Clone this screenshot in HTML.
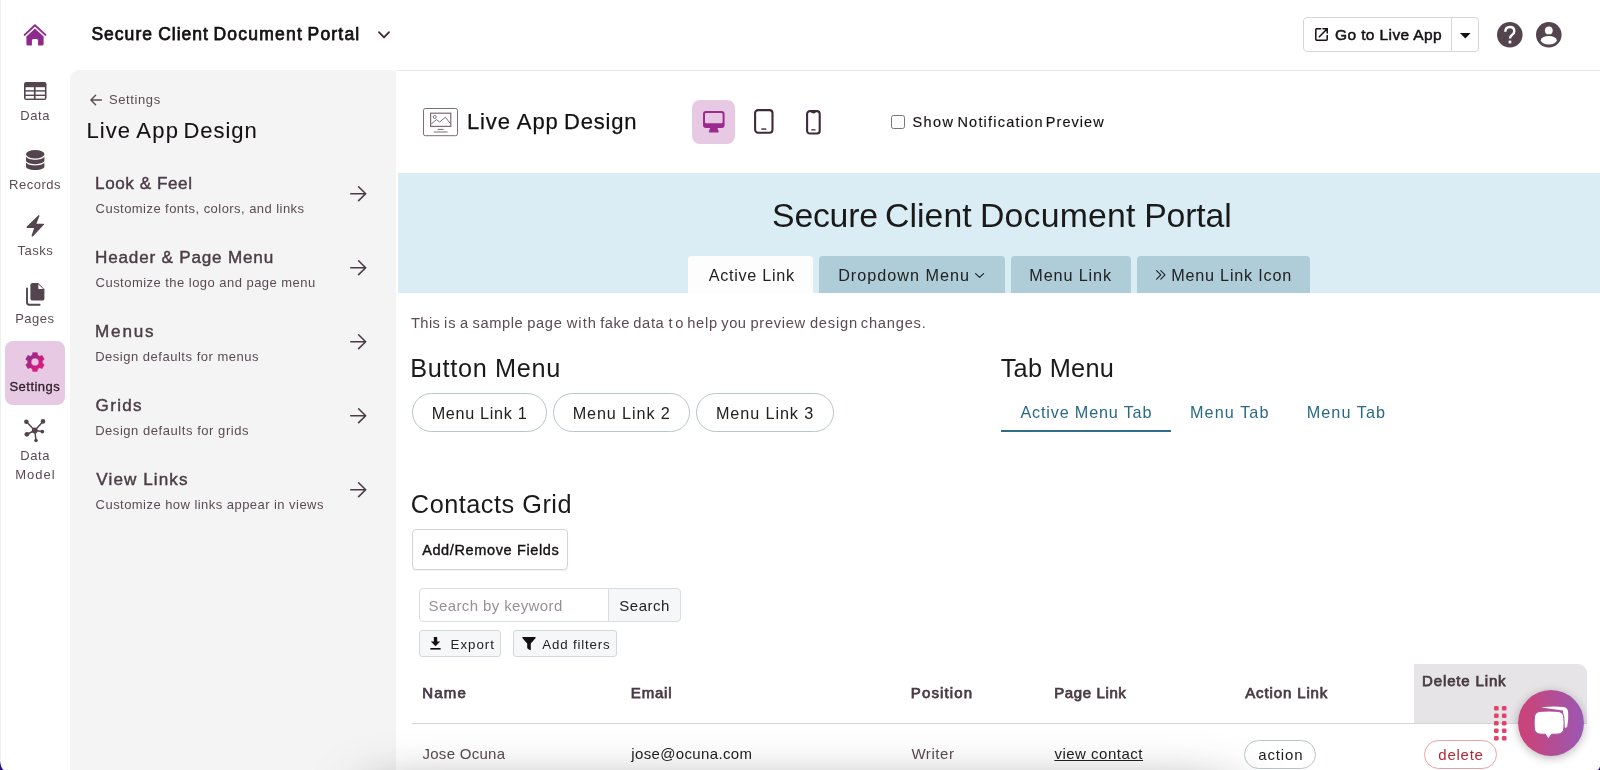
<!DOCTYPE html>
<html lang="en"><head><meta charset="utf-8"><title>Live App Design</title>
<style>
html,body{margin:0;padding:0}
body{width:1600px;height:770px;overflow:hidden;position:relative;background:#fff;font-family:"Liberation Sans",sans-serif;}
.t{position:absolute;white-space:nowrap;display:block}
.a{position:absolute;box-sizing:border-box}
svg{position:absolute;overflow:visible}
</style></head><body>
<!-- bottom shadow -->
<!-- left edge -->
<div class="a" style="left:0;top:0;width:1px;height:760px;background:#efefef"></div>
<!-- top bar border -->
<div class="a" style="left:397px;top:70px;width:1203px;height:1px;background:#e7e5e6"></div>
<!-- settings panel -->
<div class="a" style="left:70px;top:70px;width:326px;height:700px;background:#f4f4f4;border-top-left-radius:9px"></div>
<!-- sidebar selected -->
<div class="a" style="left:5px;top:341px;width:60px;height:64px;background:#e8c9e4;border-radius:8px"></div>
<!-- go to live app button -->
<div class="a" style="left:1303px;top:17px;width:176px;height:35px;border:1px solid #d9d5d7;border-radius:4px"></div>
<div class="a" style="left:1451px;top:18px;width:1px;height:33px;background:#d9d5d7"></div>
<!-- device selected -->
<div class="a" style="left:691.7px;top:100px;width:43.6px;height:44px;background:#e8c9e4;border-radius:8px"></div>
<!-- checkbox -->
<div class="a" style="left:891px;top:115px;width:14px;height:14px;border:1px solid #767676;border-radius:2.5px;background:#fff"></div>
<!-- banner -->
<div class="a" style="left:398px;top:173px;width:1202px;height:120px;background:#daedf4"></div>
<div class="a" style="left:688px;top:256px;width:125px;height:37px;background:#fdfdfe;border-radius:4px 4px 0 0"></div>
<div class="a" style="left:819px;top:256px;width:186px;height:37px;background:#aecdd9;border-radius:4px 4px 0 0"></div>
<div class="a" style="left:1011px;top:256px;width:120px;height:37px;background:#aecdd9;border-radius:4px 4px 0 0"></div>
<div class="a" style="left:1137px;top:256px;width:173px;height:37px;background:#aecdd9;border-radius:4px 4px 0 0"></div>
<!-- button menu -->
<div class="a" style="left:412px;top:393px;width:135px;height:39px;border:1px solid #b9c5c9;border-radius:20px"></div>
<div class="a" style="left:553px;top:393px;width:137px;height:39px;border:1px solid #b9c5c9;border-radius:20px"></div>
<div class="a" style="left:696px;top:393px;width:138px;height:39px;border:1px solid #b9c5c9;border-radius:20px"></div>
<!-- tab underline -->
<div class="a" style="left:1000.5px;top:430px;width:170px;height:2px;background:#2f6e8a"></div>
<!-- add/remove -->
<div class="a" style="left:412px;top:529px;width:156px;height:41px;border:1px solid #d6d3d5;border-radius:4px;box-shadow:0 1px 1px rgba(0,0,0,.06)"></div>
<!-- search -->
<div class="a" style="left:419px;top:588px;width:190px;height:34px;border:1px solid #d8dde3;border-radius:4px 0 0 4px;background:#fff"></div>
<div class="a" style="left:608px;top:588px;width:73px;height:34px;border:1px solid #d8dde3;border-radius:0 4px 4px 0;background:#f6f7f9"></div>
<div class="a" style="left:419px;top:630px;width:82px;height:26.5px;border:1px solid #d3d8de;border-radius:3px;background:#f6f7f9"></div>
<div class="a" style="left:513px;top:630px;width:104px;height:26.5px;border:1px solid #d3d8de;border-radius:3px;background:#f6f7f9"></div>
<!-- table -->
<div class="a" style="left:1414px;top:664px;width:173px;height:59px;background:#e6e4e6;border-top-right-radius:9px"></div>
<div class="a" style="left:412px;top:723px;width:1175px;height:1px;background:#d6d6d6"></div>
<div class="a" style="left:1244px;top:740px;width:72px;height:29px;border:1px solid #b9c5c9;border-radius:15px;background:#fff"></div>
<div class="a" style="left:1424px;top:740px;width:73px;height:29px;border:1px solid #e8a5a8;border-radius:15px;background:#fff"></div>
<!-- home -->
<svg style="left:23px;top:23px" width="24" height="24" viewBox="0 0 24 24"><path d="M1.6 11.9 L12 2.3 L22.4 11.9" fill="none" stroke="#8e2a8b" stroke-width="1.9" stroke-linecap="round" stroke-linejoin="round"/><path d="M12 5.6 L20.6 13.4 V21 Q20.6 22.5 19.1 22.5 H15.1 V17.6 Q15.1 16 13.6 16 H10.4 Q8.9 16 8.9 17.6 V22.5 H4.9 Q3.4 22.5 3.4 21 V13.4 Z" fill="#8e2a8b"/></svg>
<!-- table -->
<svg style="left:23.5px;top:82.2px" width="22.5" height="18" viewBox="0 0 22.5 18"><rect x="0" y="0" width="22.5" height="18" rx="2.2" fill="#54444e"/><g fill="#fff"><rect x="1.6" y="5.2" width="8.3" height="3"/><rect x="11.6" y="5.2" width="9.3" height="3"/><rect x="1.6" y="9.6" width="8.3" height="3"/><rect x="11.6" y="9.6" width="9.3" height="3"/><rect x="1.6" y="14" width="8.3" height="2.6"/><rect x="11.6" y="14" width="9.3" height="2.6"/></g></svg>
<!-- database -->
<svg style="left:25.6px;top:150px" width="18.4" height="20" viewBox="0 0 18.4 20"><g fill="#54444e"><ellipse cx="9.2" cy="4.2" rx="9.2" ry="4.2"/><path d="M0 6.6 C1.2 8.9 5 9.8 9.2 9.8 S17.2 8.9 18.4 6.6 V10.6 C18.4 12.6 14.3 14.2 9.2 14.2 S0 12.6 0 10.6Z"/><path d="M0 12.6 C1.2 14.6 5 15.5 9.2 15.5 S17.2 14.6 18.4 12.6 V16.4 C18.4 18.4 14.3 20 9.2 20 S0 18.4 0 16.4Z"/></g></svg>
<!-- bolt -->
<svg style="left:25.6px;top:215px" width="18.4" height="22" viewBox="0 0 18.4 22"><path d="M12.4 0.3 L0.6 11.8 Q0 12.9 1.3 12.9 H8.1 L5.6 20.6 Q5.6 22.3 7 21.2 L17.9 9.8 Q18.6 8.7 17.3 8.7 H10.4 L13.4 1 Q13.4 -0.4 12.4 0.3Z" fill="#54444e"/></svg>
<!-- pages -->
<svg style="left:25.6px;top:283px" width="18.4" height="22.8" viewBox="0 0 18.4 22.8"><path d="M1 5.4 V19.6 Q1 21.8 3.2 21.8 H13.6" fill="none" stroke="#54444e" stroke-width="1.9" stroke-linecap="round"/><path d="M6.6 0 H12.2 L18.4 6.2 V15.4 Q18.4 17.6 16.2 17.6 H6.6 Q4.4 17.6 4.4 15.4 V2.2 Q4.4 0 6.6 0Z" fill="#54444e"/><path d="M12.3 1.2 L17.2 6.1 H13.2 Q12.3 6.1 12.3 5.2Z" fill="#fff"/></svg>
<!-- gear -->
<svg style="left:24.85px;top:352.1px" width="20" height="20" viewBox="-10 -10 20 20"><defs><linearGradient id="gg" x1="0.1" y1="0.1" x2="0.9" y2="0.9"><stop offset="0" stop-color="#8e2a8b"/><stop offset="1" stop-color="#e8187a"/></linearGradient></defs><path fill="url(#gg)" fill-rule="evenodd" d="M-2.80 -6.90 L-2.30 -9.50 L2.30 -9.50 L2.80 -6.90 L4.58 -5.87 L7.08 -6.74 L9.38 -2.76 L7.38 -1.03 L7.38 1.03 L9.38 2.76 L7.08 6.74 L4.58 5.87 L2.80 6.90 L2.30 9.50 L-2.30 9.50 L-2.80 6.90 L-4.58 5.87 L-7.08 6.74 L-9.38 2.76 L-7.38 1.03 L-7.38 -1.03 L-9.38 -2.76 L-7.08 -6.74 L-4.58 -5.87Z M0 -3.8 A3.8 3.8 0 1 0 0 3.8 A3.8 3.8 0 1 0 0 -3.8Z" stroke="url(#gg)" stroke-width="0.3" stroke-linejoin="round"/></svg>
<!-- data model -->
<svg style="left:23.5px;top:419.4px" width="21.6" height="23.6" viewBox="0 0 21.6 23.6"><g stroke="#54444e" stroke-width="1.5" fill="none"><path d="M10.8 11.5 L2.4 2.7 M10.8 11.5 L19 2.4 M10.8 11.5 L18.3 12.6 M10.8 11.5 L2.9 15.3 M10.8 11.5 L12 21.5"/></g><g fill="#54444e"><circle cx="10.8" cy="11.5" r="2.9"/><circle cx="2.4" cy="2.7" r="2.3"/><circle cx="19" cy="2.4" r="2.3"/><circle cx="18.3" cy="12.6" r="1.9"/><circle cx="2.9" cy="15.3" r="2.4"/><circle cx="12" cy="21.5" r="1.8"/></g></svg>
<!-- back arrow -->
<svg style="left:90px;top:94.1px" width="12" height="12" viewBox="0 0 12 12"><path d="M11.4 6 H1 M5.6 1.2 L0.9 6 L5.6 10.8" fill="none" stroke="#5a4b54" stroke-width="1.4" stroke-linecap="round" stroke-linejoin="round"/></svg>
<!-- chevron down title -->
<svg style="left:378px;top:31px" width="12" height="8" viewBox="0 0 12 8"><path d="M1 1.2 L6 6.4 L11 1.2" fill="none" stroke="#3f2f3a" stroke-width="1.9" stroke-linecap="round" stroke-linejoin="round"/></svg>
<!-- right arrows -->
<svg style="left:350px;top:186px" width="17" height="312" viewBox="0 0 17 312"><g fill="none" stroke="#4a3b45" stroke-width="1.6" stroke-linecap="round" stroke-linejoin="round"><path d="M0.8 7.7 H15.6 M8.6 0.8 L15.7 7.7 L8.6 14.6"/><path d="M0.8 81.7 H15.6 M8.6 74.8 L15.7 81.7 L8.6 88.6"/><path d="M0.8 155.7 H15.6 M8.6 148.8 L15.7 155.7 L8.6 162.6"/><path d="M0.8 229.7 H15.6 M8.6 222.8 L15.7 229.7 L8.6 236.6"/><path d="M0.8 303.7 H15.6 M8.6 296.8 L15.7 303.7 L8.6 310.6"/></g></svg>
<!-- external link -->
<svg style="left:1315px;top:28px" width="13" height="13" viewBox="0 0 13 13"><path d="M6.3 0.8 H1.7 Q0.8 0.8 0.8 1.7 V11.3 Q0.8 12.2 1.7 12.2 H11.3 Q12.2 12.2 12.2 11.3 V7" fill="none" stroke="#141014" stroke-width="1.5"/><path d="M8 0.8 H12.2 V5 M12 1 L4.3 8.7" fill="none" stroke="#141014" stroke-width="1.5" stroke-linecap="round" stroke-linejoin="miter"/></svg>
<!-- caret -->
<svg style="left:1459.6px;top:32.6px" width="10.6" height="5.6" viewBox="0 0 10.6 5.6"><path d="M0 0 H10.6 L5.3 5.6Z" fill="#141014"/></svg>
<!-- help -->
<svg style="left:1496.8px;top:22px" width="25.6" height="25.6" viewBox="0 0 25.6 25.6"><circle cx="12.8" cy="12.8" r="12.8" fill="#54444e"/><path d="M8.3 9.8 Q8.3 5 12.8 5 Q17.3 5 17.3 9.2 Q17.3 11.4 15 12.9 Q13 14.2 13 16.6" fill="none" stroke="#fff" stroke-width="2.4"/><rect x="11.6" y="18.6" width="2.7" height="2.8" fill="#fff"/></svg>
<!-- user -->
<svg style="left:1536px;top:22px" width="25.6" height="25.6" viewBox="0 0 25.6 25.6"><circle cx="12.8" cy="12.8" r="12.8" fill="#54444e"/><circle cx="12.8" cy="8.4" r="3.9" fill="#fff"/><ellipse cx="12.8" cy="18.2" rx="8" ry="4.2" fill="#fff"/></svg>
<!-- app design icon -->
<svg style="left:423.4px;top:107.8px" width="35.5" height="28.2" viewBox="0 0 35.5 28.2"><g fill="none" stroke="#7b6c76" stroke-width="1"><rect x="0.5" y="0.5" width="34" height="27.2" rx="1.8"/><rect x="7.6" y="5.2" width="20.2" height="13.2" stroke-width="1.2"/><circle cx="11.7" cy="9" r="1.5"/><path d="M8.2 16 L13.5 11.6 L16.6 14 L22.4 9.2 L27.4 15.6"/><path d="M14.6 21.4 H20.6 M10.8 24 H24.6"/></g></svg>
<!-- desktop -->
<svg style="left:702.6px;top:111px" width="21.6" height="21.6" viewBox="0 0 21.6 21.6"><path d="M3 0 H18.6 Q21.6 0 21.6 3 V14 Q21.6 17 18.6 17 H3 Q0 17 0 14 V3 Q0 0 3 0Z M3.2 2 Q2 2 2 3.2 V11 Q2 12.2 3.2 12.2 H18.4 Q19.6 12.2 19.6 11 V3.2 Q19.6 2 18.4 2Z" fill="#9b2a8e" fill-rule="evenodd"/><path d="M7.4 16.6 H14.2 L15.6 20.2 Q16.1 21.6 14.9 21.6 H6.7 Q5.5 21.6 6 20.2Z" fill="#9b2a8e"/></svg>
<!-- tablet -->
<svg style="left:753.6px;top:109.3px" width="19.6" height="24.8" viewBox="0 0 19.6 24.8"><rect x="1.1" y="1.1" width="17.4" height="22.6" rx="3" fill="none" stroke="#3f2a3a" stroke-width="2.1"/><rect x="7.3" y="19.4" width="5" height="1.4" fill="#3f2a3a"/></svg>
<!-- phone -->
<svg style="left:806.2px;top:109.6px" width="14.8" height="24.6" viewBox="0 0 14.8 24.6"><rect x="1.1" y="1.1" width="12.6" height="22.4" rx="2.8" fill="none" stroke="#3f2a3a" stroke-width="2.1"/><path d="M4.6 1.6 H10.2 Q9.6 3.6 7.4 3.6 Q5.2 3.6 4.6 1.6Z" fill="#3f2a3a"/><rect x="5.2" y="19.2" width="4.4" height="1.4" rx="0.5" fill="#3f2a3a"/></svg>
<!-- tab chevron -->
<svg style="left:975.4px;top:272.6px" width="9.2" height="5.2" viewBox="0 0 9.2 5.2"><path d="M0.6 0.6 L4.6 4.4 L8.6 0.6" fill="none" stroke="#222" stroke-width="1.2" stroke-linecap="round" stroke-linejoin="round"/></svg>
<!-- double chevron right -->
<svg style="left:1156px;top:270.4px" width="9.6" height="9.8" viewBox="0 0 9.6 9.8"><path d="M0.6 0.6 L4.8 4.9 L0.6 9.2 M4.8 0.6 L9 4.9 L4.8 9.2" fill="none" stroke="#222" stroke-width="1.15" stroke-linecap="round" stroke-linejoin="round"/></svg>

<div id="txt" style="position:absolute;left:0;top:0;width:1600px;height:770px;will-change:transform">
<span class="t" id="t0" style="left:91.38px;top:26.09px;font-size:17.5px;line-height:17.5px;font-weight:400;color:#141014;letter-spacing:1.031px;-webkit-text-stroke:0.75px #141014;">Secure </span>
<span class="t" id="t1" style="left:158.16px;top:26.09px;font-size:17.5px;line-height:17.5px;font-weight:400;color:#141014;letter-spacing:0.985px;-webkit-text-stroke:0.75px #141014;">Client </span>
<span class="t" id="t2" style="left:213.50px;top:26.09px;font-size:17.5px;line-height:17.5px;font-weight:400;color:#141014;letter-spacing:1.216px;-webkit-text-stroke:0.75px #141014;">Document </span>
<span class="t" id="t3" style="left:307.50px;top:26.09px;font-size:17.5px;line-height:17.5px;font-weight:400;color:#141014;letter-spacing:1.203px;-webkit-text-stroke:0.75px #141014;">Portal</span>
<span class="t" id="t4" style="left:1335.04px;top:26.88px;font-size:15.5px;line-height:15.5px;font-weight:400;color:#141014;letter-spacing:0.383px;-webkit-text-stroke:0.5px #141014;">Go to Live App</span>
<span class="t" id="t5" style="left:20.33px;top:109.00px;font-size:13px;line-height:13px;font-weight:400;color:#5a4b54;letter-spacing:0.562px;">Data</span>
<span class="t" id="t6" style="left:9.02px;top:178.00px;font-size:13px;line-height:13px;font-weight:400;color:#5a4b54;letter-spacing:0.528px;">Records</span>
<span class="t" id="t7" style="left:17.45px;top:243.60px;font-size:13px;line-height:13px;font-weight:400;color:#5a4b54;letter-spacing:0.508px;">Tasks</span>
<span class="t" id="t8" style="left:15.16px;top:312.00px;font-size:13px;line-height:13px;font-weight:400;color:#5a4b54;letter-spacing:0.519px;">Pages</span>
<span class="t" id="t9" style="left:9.44px;top:380.30px;font-size:13px;line-height:13px;font-weight:400;color:#2a1f27;letter-spacing:0.478px;-webkit-text-stroke:0.3px #2a1f27;">Settings</span>
<span class="t" id="t10" style="left:20.33px;top:449.00px;font-size:13px;line-height:13px;font-weight:400;color:#5a4b54;letter-spacing:0.562px;">Data</span>
<span class="t" id="t11" style="left:15.16px;top:467.50px;font-size:13px;line-height:13px;font-weight:400;color:#5a4b54;letter-spacing:1.038px;">Model</span>
<span class="t" id="t12" style="left:108.91px;top:93.40px;font-size:13px;line-height:13px;font-weight:400;color:#5a4b54;letter-spacing:0.621px;">Settings</span>
<span class="t" id="t13" style="left:86.43px;top:119.58px;font-size:22px;line-height:22px;font-weight:400;color:#141014;letter-spacing:1.072px;-webkit-text-stroke:0.1px #141014;">Live </span>
<span class="t" id="t14" style="left:136.36px;top:119.58px;font-size:22px;line-height:22px;font-weight:400;color:#141014;letter-spacing:1.194px;-webkit-text-stroke:0.1px #141014;">App </span>
<span class="t" id="t15" style="left:183.54px;top:119.58px;font-size:22px;line-height:22px;font-weight:400;color:#141014;letter-spacing:0.929px;-webkit-text-stroke:0.1px #141014;">Design</span>
<span class="t" id="t16" style="left:95.07px;top:174.52px;font-size:17.1px;line-height:17.1px;font-weight:400;color:#4a3b45;letter-spacing:0.569px;-webkit-text-stroke:0.42px #4a3b45;">Look &amp; Feel</span>
<span class="t" id="t17" style="left:95.62px;top:202.00px;font-size:13px;line-height:13px;font-weight:400;color:#5a4b54;letter-spacing:0.449px;">Customize fonts, colors, and links</span>
<span class="t" id="t18" style="left:95.07px;top:248.52px;font-size:17.1px;line-height:17.1px;font-weight:400;color:#4a3b45;letter-spacing:0.805px;-webkit-text-stroke:0.42px #4a3b45;">Header &amp; Page Menu</span>
<span class="t" id="t19" style="left:95.62px;top:276.00px;font-size:13px;line-height:13px;font-weight:400;color:#5a4b54;letter-spacing:0.463px;">Customize the logo and page menu</span>
<span class="t" id="t20" style="left:95.07px;top:322.52px;font-size:17.1px;line-height:17.1px;font-weight:400;color:#4a3b45;letter-spacing:1.792px;-webkit-text-stroke:0.42px #4a3b45;">Menus</span>
<span class="t" id="t21" style="left:95.15px;top:350.00px;font-size:13px;line-height:13px;font-weight:400;color:#5a4b54;letter-spacing:0.517px;">Design defaults for menus</span>
<span class="t" id="t22" style="left:95.52px;top:396.52px;font-size:17.1px;line-height:17.1px;font-weight:400;color:#4a3b45;letter-spacing:1.329px;-webkit-text-stroke:0.42px #4a3b45;">Grids</span>
<span class="t" id="t23" style="left:95.15px;top:424.00px;font-size:13px;line-height:13px;font-weight:400;color:#5a4b54;letter-spacing:0.549px;">Design defaults for grids</span>
<span class="t" id="t24" style="left:96.33px;top:470.52px;font-size:17.1px;line-height:17.1px;font-weight:400;color:#4a3b45;letter-spacing:1.088px;-webkit-text-stroke:0.42px #4a3b45;">View Links</span>
<span class="t" id="t25" style="left:95.62px;top:498.00px;font-size:13px;line-height:13px;font-weight:400;color:#5a4b54;letter-spacing:0.453px;">Customize how links appear in views</span>
<span class="t" id="t26" style="left:466.89px;top:110.78px;font-size:22px;line-height:22px;font-weight:400;color:#111;letter-spacing:0.922px;-webkit-text-stroke:0.25px #111;">Live </span>
<span class="t" id="t27" style="left:516.84px;top:110.78px;font-size:22px;line-height:22px;font-weight:400;color:#111;letter-spacing:0.918px;-webkit-text-stroke:0.25px #111;">App </span>
<span class="t" id="t28" style="left:564.01px;top:110.78px;font-size:22px;line-height:22px;font-weight:400;color:#111;letter-spacing:0.811px;-webkit-text-stroke:0.25px #111;">Design</span>
<span class="t" id="t29" style="left:912.53px;top:114.98px;font-size:14.5px;line-height:14.5px;font-weight:400;color:#141014;letter-spacing:1.422px;-webkit-text-stroke:0.15px #141014;">Show </span>
<span class="t" id="t30" style="left:957.42px;top:114.98px;font-size:14.5px;line-height:14.5px;font-weight:400;color:#141014;letter-spacing:1.217px;-webkit-text-stroke:0.15px #141014;">Notification </span>
<span class="t" id="t31" style="left:1045.78px;top:114.98px;font-size:14.5px;line-height:14.5px;font-weight:400;color:#141014;letter-spacing:1.061px;-webkit-text-stroke:0.15px #141014;">Preview</span>
<span class="t" id="t32" style="left:772.10px;top:198.69px;font-size:33.8px;line-height:33.8px;font-weight:400;color:#1a1a1a;letter-spacing:-0.244px;">Secure </span>
<span class="t" id="t33" style="left:885.11px;top:198.69px;font-size:33.8px;line-height:33.8px;font-weight:400;color:#1a1a1a;letter-spacing:0.026px;">Client </span>
<span class="t" id="t34" style="left:979.94px;top:198.69px;font-size:33.8px;line-height:33.8px;font-weight:400;color:#1a1a1a;letter-spacing:0.204px;">Document </span>
<span class="t" id="t35" style="left:1144.14px;top:198.69px;font-size:33.8px;line-height:33.8px;font-weight:400;color:#1a1a1a;letter-spacing:-0.124px;">Portal</span>
<span class="t" id="t36" style="left:708.69px;top:267.29px;font-size:16.2px;line-height:16.2px;font-weight:400;color:#222;letter-spacing:0.707px;">Active Link</span>
<span class="t" id="t37" style="left:838.13px;top:267.29px;font-size:16.2px;line-height:16.2px;font-weight:400;color:#222;letter-spacing:1.016px;">Dropdown Menu</span>
<span class="t" id="t38" style="left:1029.37px;top:267.29px;font-size:16.2px;line-height:16.2px;font-weight:400;color:#222;letter-spacing:0.868px;">Menu Link</span>
<span class="t" id="t39" style="left:1171.19px;top:267.29px;font-size:16.2px;line-height:16.2px;font-weight:400;color:#222;letter-spacing:0.789px;">Menu Link Icon</span>
<span class="t" id="t40" style="left:410.97px;top:315.56px;font-size:14.7px;line-height:14.7px;font-weight:400;color:#5a4b54;letter-spacing:0.412px;">This </span>
<span class="t" id="t41" style="left:443.88px;top:315.56px;font-size:14.7px;line-height:14.7px;font-weight:400;color:#5a4b54;letter-spacing:1.014px;">is </span>
<span class="t" id="t42" style="left:459.95px;top:315.56px;font-size:14.7px;line-height:14.7px;font-weight:400;color:#5a4b54;letter-spacing:-4.512px;">a </span>
<span class="t" id="t43" style="left:472.58px;top:315.56px;font-size:14.7px;line-height:14.7px;font-weight:400;color:#5a4b54;letter-spacing:0.547px;">sample </span>
<span class="t" id="t44" style="left:527.13px;top:315.56px;font-size:14.7px;line-height:14.7px;font-weight:400;color:#5a4b54;letter-spacing:0.681px;">page </span>
<span class="t" id="t45" style="left:566.76px;top:315.56px;font-size:14.7px;line-height:14.7px;font-weight:400;color:#5a4b54;letter-spacing:1.003px;">with </span>
<span class="t" id="t46" style="left:600.23px;top:315.56px;font-size:14.7px;line-height:14.7px;font-weight:400;color:#5a4b54;letter-spacing:0.457px;">fake </span>
<span class="t" id="t47" style="left:633.36px;top:315.56px;font-size:14.7px;line-height:14.7px;font-weight:400;color:#5a4b54;letter-spacing:0.595px;">data </span>
<span class="t" id="t48" style="left:668.51px;top:315.56px;font-size:14.7px;line-height:14.7px;font-weight:400;color:#5a4b54;letter-spacing:2.550px;">to </span>
<span class="t" id="t49" style="left:687.14px;top:315.56px;font-size:14.7px;line-height:14.7px;font-weight:400;color:#5a4b54;letter-spacing:0.764px;">help </span>
<span class="t" id="t50" style="left:721.30px;top:315.56px;font-size:14.7px;line-height:14.7px;font-weight:400;color:#5a4b54;letter-spacing:0.519px;">you </span>
<span class="t" id="t51" style="left:750.50px;top:315.56px;font-size:14.7px;line-height:14.7px;font-weight:400;color:#5a4b54;letter-spacing:0.669px;">preview </span>
<span class="t" id="t52" style="left:809.90px;top:315.56px;font-size:14.7px;line-height:14.7px;font-weight:400;color:#5a4b54;letter-spacing:0.790px;">design </span>
<span class="t" id="t53" style="left:860.87px;top:315.56px;font-size:14.7px;line-height:14.7px;font-weight:400;color:#5a4b54;letter-spacing:0.750px;">changes.</span>
<span class="t" id="t54" style="left:410.37px;top:356.38px;font-size:25.3px;line-height:25.3px;font-weight:400;color:#1a1a1a;letter-spacing:0.640px;">Button Menu</span>
<span class="t" id="t55" style="left:1000.67px;top:356.38px;font-size:25.3px;line-height:25.3px;font-weight:400;color:#1a1a1a;letter-spacing:0.311px;">Tab Menu</span>
<span class="t" id="t56" style="left:410.86px;top:491.58px;font-size:25.3px;line-height:25.3px;font-weight:400;color:#1a1a1a;letter-spacing:0.499px;">Contacts Grid</span>
<span class="t" id="t57" style="left:431.67px;top:404.89px;font-size:16.2px;line-height:16.2px;font-weight:400;color:#222;letter-spacing:0.695px;">Menu Link 1</span>
<span class="t" id="t58" style="left:572.67px;top:404.89px;font-size:16.2px;line-height:16.2px;font-weight:400;color:#222;letter-spacing:0.891px;">Menu Link 2</span>
<span class="t" id="t59" style="left:715.90px;top:404.89px;font-size:16.2px;line-height:16.2px;font-weight:400;color:#222;letter-spacing:0.921px;">Menu Link 3</span>
<span class="t" id="t60" style="left:1020.49px;top:404.29px;font-size:16.2px;line-height:16.2px;font-weight:400;color:#2a6a85;letter-spacing:0.824px;">Active Menu Tab</span>
<span class="t" id="t61" style="left:1190.02px;top:404.29px;font-size:16.2px;line-height:16.2px;font-weight:400;color:#2a6a85;letter-spacing:1.087px;">Menu Tab</span>
<span class="t" id="t62" style="left:1306.71px;top:404.29px;font-size:16.2px;line-height:16.2px;font-weight:400;color:#2a6a85;letter-spacing:1.086px;">Menu Tab</span>
<span class="t" id="t63" style="left:422.13px;top:542.73px;font-size:14.5px;line-height:14.5px;font-weight:400;color:#141014;letter-spacing:0.629px;-webkit-text-stroke:0.38px #141014;">Add/Remove Fields</span>
<span class="t" id="t64" style="left:428.62px;top:598.00px;font-size:15px;line-height:15px;font-weight:400;color:#9a8f96;letter-spacing:0.382px;">Search by keyword</span>
<span class="t" id="t65" style="left:619.35px;top:598.00px;font-size:15px;line-height:15px;font-weight:400;color:#222;letter-spacing:0.492px;">Search</span>
<span class="t" id="t66" style="left:450.59px;top:637.64px;font-size:13.3px;line-height:13.3px;font-weight:400;color:#222;letter-spacing:0.991px;">Export</span>
<span class="t" id="t67" style="left:542.36px;top:637.64px;font-size:13.3px;line-height:13.3px;font-weight:400;color:#222;letter-spacing:0.817px;">Add filters</span>
<span class="t" id="t68" style="left:422.20px;top:685.30px;font-size:15px;line-height:15px;font-weight:400;color:#4a3b45;letter-spacing:1.199px;-webkit-text-stroke:0.75px #4a3b45;">Name</span>
<span class="t" id="t69" style="left:630.83px;top:685.30px;font-size:15px;line-height:15px;font-weight:400;color:#4a3b45;letter-spacing:0.806px;-webkit-text-stroke:0.75px #4a3b45;">Email</span>
<span class="t" id="t70" style="left:910.83px;top:685.30px;font-size:15px;line-height:15px;font-weight:400;color:#4a3b45;letter-spacing:1.121px;-webkit-text-stroke:0.75px #4a3b45;">Position</span>
<span class="t" id="t71" style="left:1054.20px;top:685.30px;font-size:15px;line-height:15px;font-weight:400;color:#4a3b45;letter-spacing:0.617px;-webkit-text-stroke:0.75px #4a3b45;">Page Link</span>
<span class="t" id="t72" style="left:1245.14px;top:685.30px;font-size:15px;line-height:15px;font-weight:400;color:#4a3b45;letter-spacing:0.882px;-webkit-text-stroke:0.75px #4a3b45;">Action Link</span>
<span class="t" id="t73" style="left:1422.08px;top:673.30px;font-size:15px;line-height:15px;font-weight:400;color:#4a3b45;letter-spacing:0.848px;-webkit-text-stroke:0.75px #4a3b45;">Delete Link</span>
<span class="t" id="t74" style="left:422.43px;top:746.30px;font-size:15px;line-height:15px;font-weight:400;color:#5a4b54;letter-spacing:0.291px;">Jose Ocuna</span>
<span class="t" id="t75" style="left:631.35px;top:746.30px;font-size:15px;line-height:15px;font-weight:400;color:#222;letter-spacing:0.347px;">jose@ocuna.com</span>
<span class="t" id="t76" style="left:911.40px;top:746.30px;font-size:15px;line-height:15px;font-weight:400;color:#5a4b54;letter-spacing:0.570px;">Writer</span>
<span class="t" id="t77" style="left:1054.39px;top:746.30px;font-size:15px;line-height:15px;font-weight:400;color:#222;letter-spacing:0.510px;text-decoration:underline;text-underline-offset:1px;">view contact</span>
<span class="t" id="t78" style="left:1258.31px;top:746.80px;font-size:15px;line-height:15px;font-weight:400;color:#222;letter-spacing:0.845px;">action</span>
<span class="t" id="t79" style="left:1438.34px;top:746.80px;font-size:15px;line-height:15px;font-weight:400;color:#b02a37;letter-spacing:0.753px;">delete</span>
</div>
<!-- bottom shadow -->
<div class="a" style="left:372px;top:803px;width:856px;height:50px;box-shadow:0 0 60px rgba(0,0,0,.8)"></div>
<!-- export icon -->
<svg style="left:430.2px;top:637px" width="11" height="13" viewBox="0 0 11 13"><path d="M3.8 0 H7.2 V4.4 H10.2 L5.5 9.2 L0.8 4.4 H3.8Z" fill="#141014"/><rect x="0.4" y="11" width="10.2" height="1.6" fill="#141014"/></svg>
<!-- funnel -->
<svg style="left:522px;top:636.8px" width="14" height="13.4" viewBox="0 0 14 13.4"><path d="M0.9 0 H13.1 Q14.2 0.2 13.5 1.2 L8.8 6.6 V12.6 Q8.7 13.6 7.8 13.1 L5.5 11.4 Q5.2 11.1 5.2 10.7 V6.6 L0.5 1.2 Q-0.2 0.2 0.9 0Z" fill="#141014"/></svg>
<!-- drag dots -->
<svg style="left:1493.7px;top:705.6px" width="13" height="35" viewBox="0 0 13 35"><g fill="#e0446e"><rect x="0" y="0" width="4.6" height="4.6" rx="1.3"/><rect x="7.9" y="0" width="4.6" height="4.6" rx="1.3"/><rect x="0" y="7.5" width="4.6" height="4.6" rx="1.3"/><rect x="7.9" y="7.5" width="4.6" height="4.6" rx="1.3"/><rect x="0" y="15" width="4.6" height="4.6" rx="1.3"/><rect x="7.9" y="15" width="4.6" height="4.6" rx="1.3"/><rect x="0" y="22.5" width="4.6" height="4.6" rx="1.3"/><rect x="7.9" y="22.5" width="4.6" height="4.6" rx="1.3"/><rect x="0" y="30" width="4.6" height="4.6" rx="1.3"/><rect x="7.9" y="30" width="4.6" height="4.6" rx="1.3"/></g></svg>
<!-- chat -->
<div class="a" style="left:1518px;top:690px;width:66px;height:66px;border-radius:50%;background:linear-gradient(90deg,#c7457c 15%,#9a58b3 100%);box-shadow:0 2px 10px rgba(0,0,0,.28)"></div>
<svg style="left:1534px;top:706px" width="36" height="35" viewBox="0 0 36 35"><path d="M7 1.6 Q18 -0.4 29.4 1 Q34 1.6 34.2 7 Q34.6 14 33.2 20.4 Q32.8 21.8 30.6 21.6 L29 4.4Z" fill="#fff"/><path d="M7 5.3 Q15 4.7 23 5.3 Q29.6 5.6 29.9 12 Q30.3 17 29.9 22 Q29.6 28 23 28.2 H17.6 L14.3 33 L11.4 28.2 H7 Q0.6 28 0.3 22 Q-0.1 17 0.3 12 Q0.6 5.6 7 5.3Z" fill="#fff" stroke="#b04c9a" stroke-width="1"/></svg>
<!-- window corners -->
<svg style="left:0;top:760px" width="4" height="10" viewBox="0 0 4 10"><path d="M0 0 V10 H3.4 Q0.6 7.5 0 0Z" fill="#2c1080"/></svg>
<svg style="left:1597px;top:766px" width="3" height="4" viewBox="0 0 3 4"><path d="M3 0.5 V4 H0.4 Q2.4 3 3 0.5Z" fill="#2c1080"/></svg>

</body></html>
